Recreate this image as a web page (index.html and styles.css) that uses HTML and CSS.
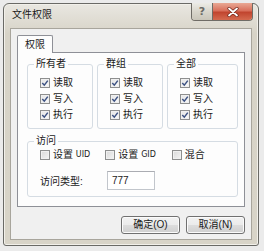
FILE: index.html
```html
<!DOCTYPE html>
<html>
<head>
<meta charset="utf-8">
<link rel="stylesheet" href="styles.css">
</head>
<body>
<div class="window">
  <div class="titlebar">
    <span class="title">文件权限</span>
    <div class="caption-btns">
      <div class="cap help">?</div>
      <div class="cap close">
        <svg width="14" height="10" viewBox="0 0 14 10"><path d="M3 1.5 L11 8.5 M11 1.5 L3 8.5" stroke="#6e2418" stroke-width="3.2" stroke-linecap="round"/><path d="M3 1.5 L11 8.5 M11 1.5 L3 8.5" stroke="#fff" stroke-width="1.8" stroke-linecap="round"/></svg>
      </div>
    </div>
  </div>
  <div class="content">
    <div class="tabs"><div class="tab">权限</div></div>
    <div class="panel">
      <div class="groups">
        <fieldset class="group">
          <legend>所有者</legend>
          <div class="rows">
            <div class="row"><span class="cb on"><svg viewBox="0 0 8 8"><path d="M1.3 4 L3.3 6.2 L6.8 1.6" fill="none" stroke="#3d5283" stroke-width="1.5"/></svg></span>读取</div>
            <div class="row"><span class="cb on"><svg viewBox="0 0 8 8"><path d="M1.3 4 L3.3 6.2 L6.8 1.6" fill="none" stroke="#3d5283" stroke-width="1.5"/></svg></span>写入</div>
            <div class="row"><span class="cb on"><svg viewBox="0 0 8 8"><path d="M1.3 4 L3.3 6.2 L6.8 1.6" fill="none" stroke="#3d5283" stroke-width="1.5"/></svg></span>执行</div>
          </div>
        </fieldset>
        <fieldset class="group">
          <legend>群组</legend>
          <div class="rows">
            <div class="row"><span class="cb on"><svg viewBox="0 0 8 8"><path d="M1.3 4 L3.3 6.2 L6.8 1.6" fill="none" stroke="#3d5283" stroke-width="1.5"/></svg></span>读取</div>
            <div class="row"><span class="cb on"><svg viewBox="0 0 8 8"><path d="M1.3 4 L3.3 6.2 L6.8 1.6" fill="none" stroke="#3d5283" stroke-width="1.5"/></svg></span>写入</div>
            <div class="row"><span class="cb on"><svg viewBox="0 0 8 8"><path d="M1.3 4 L3.3 6.2 L6.8 1.6" fill="none" stroke="#3d5283" stroke-width="1.5"/></svg></span>执行</div>
          </div>
        </fieldset>
        <fieldset class="group">
          <legend>全部</legend>
          <div class="rows">
            <div class="row"><span class="cb on"><svg viewBox="0 0 8 8"><path d="M1.3 4 L3.3 6.2 L6.8 1.6" fill="none" stroke="#3d5283" stroke-width="1.5"/></svg></span>读取</div>
            <div class="row"><span class="cb on"><svg viewBox="0 0 8 8"><path d="M1.3 4 L3.3 6.2 L6.8 1.6" fill="none" stroke="#3d5283" stroke-width="1.5"/></svg></span>写入</div>
            <div class="row"><span class="cb on"><svg viewBox="0 0 8 8"><path d="M1.3 4 L3.3 6.2 L6.8 1.6" fill="none" stroke="#3d5283" stroke-width="1.5"/></svg></span>执行</div>
          </div>
        </fieldset>
      </div>
      <fieldset class="group access">
        <legend>访问</legend>
        <div class="access-body">
          <div class="flags">
            <div class="row flag"><span class="cb"></span>设置&nbsp;<span class="latin">UID</span></div>
            <div class="row flag"><span class="cb"></span>设置&nbsp;<span class="latin">GID</span></div>
            <div class="row flag"><span class="cb"></span>混合</div>
          </div>
          <div class="type-row">
            <span class="type-label">访问类型:</span>
            <div class="input">777</div>
          </div>
        </div>
      </fieldset>
    </div>
    <div class="buttons">
      <div class="btn">确定(O)</div>
      <div class="btn">取消(N)</div>
    </div>
  </div>
</div>
</body>
</html>
```
FILE: styles.css
```css
*, *::before, *::after {
  box-sizing: border-box;
}
html, body {
  margin: 0;
  padding: 0;
}
body {
  background: #ebebeb;
  padding: 3px 0 0 3px;
  font-family: "Liberation Sans", "Noto Sans CJK SC", sans-serif;
  font-size: 10px;
  color: #1a1a1a;
}
.window {
  width: 256px;
  height: 243px;
  border: 1px solid #6a6a66;
  border-radius: 6px 6px 3px 3px;
  background: linear-gradient(#e9e7e1, #d7d3c7 30px, #d8d4c8);
  box-shadow: inset 0 0 0 1px #f2f0ea;
  display: flex;
  flex-direction: column;
}
.titlebar {
  height: 24px;
  flex: none;
  display: flex;
  justify-content: space-between;
  align-items: flex-start;
  padding: 0 5px 0 8px;
}
.title {
  margin-top: 5px;
  line-height: 12px;
}
.caption-btns {
  display: flex;
  margin-top: -1px;
  border: 1px solid #6f6c66;
  border-top: none;
  border-radius: 0 0 4px 4px;
  overflow: hidden;
  height: 18px;
}
.cap {
  height: 17px;
  display: flex;
  align-items: center;
  justify-content: center;
}
.help {
  width: 21px;
  background: linear-gradient(#ecebe6, #d9d6cc 50%, #c9c5b9);
  border-right: 1px solid #6f6c66;
  color: #6b6a66;
  font-weight: bold;
  font-size: 11px;
  font-family: "DejaVu Sans", sans-serif;
}
.close {
  width: 39px;
  background: linear-gradient(#e9a894, #d9705c 45%, #c1452f 55%, #d46a4f);
}
.content {
  margin: 0 6px;
  height: 212px;
  flex: none;
  border: 1px solid #a8a59c;
  background: #f0f0f0;
  padding: 6px 6px 5px 6px;
  display: flex;
  flex-direction: column;
}
.tabs {
  display: flex;
  height: 17px;
  flex: none;
  position: relative;
  z-index: 1;
}
.tab {
  width: 36px;
  height: 18px;
  border: 1px solid #8e9097;
  border-bottom: none;
  background: #fdfdfd;
  border-radius: 2px 2px 0 0;
  text-align: center;
  line-height: 17px;
  font-size: 10px;
}
.panel {
  height: 155px;
  flex: none;
  border: 1px solid #8e9097;
  background: #fdfdfd;
  padding: 5px 6px 8px 9px;
}
.groups {
  display: grid;
  grid-template-columns: 66px 66px 71px;
  column-gap: 4px;
}
.group {
  margin: 0;
  padding: 0;
  border: 1px solid #d5dce3;
  border-radius: 3px;
  min-width: 0;
}
.group legend {
  margin-left: 6px;
  padding: 0 2px;
  line-height: 12px;
  font-size: 10px;
}
.rows {
  padding: 5px 0 5px 12px;
}
.row {
  height: 16px;
  display: flex;
  align-items: center;
  line-height: 12px;
}
.latin {
  font-family: "DejaVu Sans", sans-serif;
  font-size: 8px;
}
.cb {
  width: 10px;
  height: 10px;
  border: 1px solid #8e8f8f;
  background: linear-gradient(135deg, #d9d9d9, #f4f4f4);
  box-shadow: inset 0 0 0 1px #f0f0f0;
  margin-right: 3px;
  display: flex;
  flex: none;
}
.cb.on {
  background: linear-gradient(135deg, #e4e4e4, #fafafa);
}
.cb svg {
  width: 8px;
  height: 8px;
}
.access {
  margin-top: 6px;
}
.access-body {
  padding: 1px 0 6px 12px;
}
.flags {
  display: flex;
}
.flags .row {
  height: 14px;
}
.flag {
  width: 68px;
}
.flag:nth-child(2) {
  width: 69px;
}
.type-row {
  margin-top: 9px;
  display: flex;
  align-items: center;
  height: 19px;
}
.type-label {
  width: 67px;
}
.input {
  width: 48px;
  height: 19px;
  border: 1px solid #c2c6cc;
  border-top-color: #abadb3;
  background: #fff;
  padding-left: 4px;
  line-height: 17px;
  font-size: 10px;
}
.buttons {
  margin-top: 9px;
  display: flex;
  justify-content: flex-end;
  gap: 6px;
}
.btn {
  width: 59px;
  height: 18px;
  border: 1px solid #707070;
  border-radius: 3px;
  background: linear-gradient(#f2f2f2, #ebebeb 50%, #dddddd 50%, #cfcfcf);
  box-shadow: inset 0 0 0 1px #fbfbfb;
  text-align: center;
  line-height: 16px;
  font-size: 10px;
}
```
